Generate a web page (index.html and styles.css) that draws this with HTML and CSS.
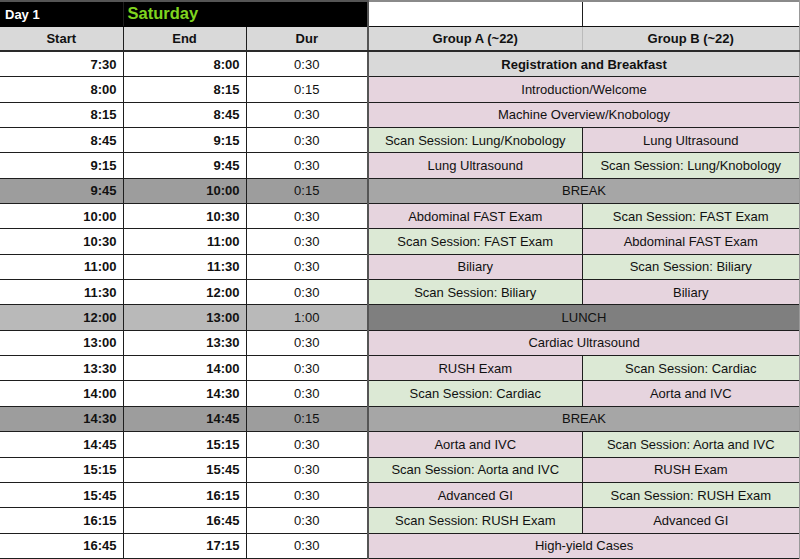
FILE: index.html
```html
<!DOCTYPE html>
<html>
<head>
<meta charset="utf-8">
<link rel="stylesheet" href="styles.css">
</head>
<body>
<table class="sheet">
  <colgroup>
    <col class="c-time"><col class="c-time"><col class="c-dur"><col class="c-ga"><col class="c-gb">
  </colgroup>
  <tr class="title">
    <td class="day">Day 1</td>
    <td class="sat" colspan="2">Saturday</td>
    <td class="blank bl"></td>
    <td class="blank br"></td>
  </tr>
  <tr class="head">
    <td>Start</td><td>End</td><td>Dur</td><td class="gsep">Group A (~22)</td><td class="last">Group B (~22)</td>
  </tr>
  <tr><td class="t">7:30</td><td class="t">8:00</td><td class="d">0:30</td><td class="gsep gray b last" colspan="2">Registration and Breakfast</td></tr>
  <tr><td class="t">8:00</td><td class="t">8:15</td><td class="d">0:15</td><td class="gsep pink last" colspan="2">Introduction/Welcome</td></tr>
  <tr><td class="t">8:15</td><td class="t">8:45</td><td class="d">0:30</td><td class="gsep pink last" colspan="2">Machine Overview/Knobology</td></tr>
  <tr><td class="t">8:45</td><td class="t">9:15</td><td class="d">0:30</td><td class="gsep green">Scan Session: Lung/Knobology</td><td class="pink last">Lung Ultrasound</td></tr>
  <tr><td class="t">9:15</td><td class="t">9:45</td><td class="d">0:30</td><td class="gsep pink">Lung Ultrasound</td><td class="green last">Scan Session: Lung/Knobology</td></tr>
  <tr class="brk"><td class="t">9:45</td><td class="t">10:00</td><td class="d">0:15</td><td class="gsep bcell last" colspan="2">BREAK</td></tr>
  <tr><td class="t">10:00</td><td class="t">10:30</td><td class="d">0:30</td><td class="gsep pink">Abdominal FAST Exam</td><td class="green last">Scan Session: FAST Exam</td></tr>
  <tr><td class="t">10:30</td><td class="t">11:00</td><td class="d">0:30</td><td class="gsep green">Scan Session: FAST Exam</td><td class="pink last">Abdominal FAST Exam</td></tr>
  <tr><td class="t">11:00</td><td class="t">11:30</td><td class="d">0:30</td><td class="gsep pink">Biliary</td><td class="green last">Scan Session: Biliary</td></tr>
  <tr><td class="t">11:30</td><td class="t">12:00</td><td class="d">0:30</td><td class="gsep green">Scan Session: Biliary</td><td class="pink last">Biliary</td></tr>
  <tr class="lunch"><td class="t">12:00</td><td class="t">13:00</td><td class="d">1:00</td><td class="gsep lcell last" colspan="2">LUNCH</td></tr>
  <tr><td class="t">13:00</td><td class="t">13:30</td><td class="d">0:30</td><td class="gsep pink last" colspan="2">Cardiac Ultrasound</td></tr>
  <tr><td class="t">13:30</td><td class="t">14:00</td><td class="d">0:30</td><td class="gsep pink">RUSH Exam</td><td class="green last">Scan Session: Cardiac</td></tr>
  <tr><td class="t">14:00</td><td class="t">14:30</td><td class="d">0:30</td><td class="gsep green">Scan Session: Cardiac</td><td class="pink last">Aorta and IVC</td></tr>
  <tr class="brk"><td class="t">14:30</td><td class="t">14:45</td><td class="d">0:15</td><td class="gsep bcell last" colspan="2">BREAK</td></tr>
  <tr><td class="t">14:45</td><td class="t">15:15</td><td class="d">0:30</td><td class="gsep pink">Aorta and IVC</td><td class="green last">Scan Session: Aorta and IVC</td></tr>
  <tr><td class="t">15:15</td><td class="t">15:45</td><td class="d">0:30</td><td class="gsep green">Scan Session: Aorta and IVC</td><td class="pink last">RUSH Exam</td></tr>
  <tr><td class="t">15:45</td><td class="t">16:15</td><td class="d">0:30</td><td class="gsep pink">Advanced GI</td><td class="green last">Scan Session: RUSH Exam</td></tr>
  <tr><td class="t">16:15</td><td class="t">16:45</td><td class="d">0:30</td><td class="gsep green">Scan Session: RUSH Exam</td><td class="pink last">Advanced GI</td></tr>
  <tr><td class="t">16:45</td><td class="t">17:15</td><td class="d">0:30</td><td class="gsep pink last" colspan="2">High-yield Cases</td></tr>
</table>
</body>
</html>
```
FILE: styles.css
```css
html, body {
  margin: 0;
  padding: 0;
  background: #fff;
  overflow: hidden;
}
body {
  font-family: "Liberation Sans", Arial, sans-serif;
  font-size: 13px;
  color: #111;
}
.sheet {
  border-collapse: collapse;
  table-layout: fixed;
  width: 800px;
}
.c-time { width: 123px; }
.c-dur { width: 122px; }
.c-ga { width: 214px; }
.c-gb { width: 218px; }

.sheet td {
  height: 24.35px;
  padding: 0 6px;
  border: 1px solid #1e1e1e;
  text-align: center;
  vertical-align: middle;
  white-space: nowrap;
  overflow: hidden;
  line-height: 15px;
}
.sheet td:first-child { border-left: none; }

.title td {
  height: 22px;
  background: #000;
  color: #fff;
  font-weight: bold;
  border-top: 2px solid #555;
  border-bottom: 1px solid #000;
}
.title .day {
  text-align: left;
  padding-left: 5px;
  font-size: 13px;
}
.title .sat {
  text-align: left;
  padding-left: 4px;
  color: #7fd41f;
  font-size: 16.5px;
  padding-bottom: 2px;
}
.title .blank {
  background: #fff;
  border-top: 2px solid #8a8a8a;
  border-bottom: 1px solid #111;
  border-left: 2px solid #555;
}
.title .br {
  border-left: 1px solid #e2e2e2;
  border-right: 2px solid #999;
}

.head td {
  height: 23px;
  background: #d9d9d9;
  font-weight: bold;
  border-bottom: 2px solid #2a2a2a;
  border-top: 1px solid #111;
}
.head td.gsep { border-left: 2px solid #555; border-right: 1px solid #bbb; }
.head td.last { border-left: 1px solid #bbb; }

.sheet td.last { border-right: 2px solid #999; }

.t { text-align: right !important; font-weight: bold; }
.d { text-align: center; }

.gsep { border-left: 2px solid #555 !important; }

.gray { background: #d9d9d9; }
.b { font-weight: bold; }
.pink { background: #e6d4de; }
.green { background: #dce9d5; }

.brk td { background: #9d9d9d; }
.brk td.bcell { background: #a6a6a6; }
.lunch td { background: #b9b9b9; }
.lunch td.lcell { background: #7f7f7f; }
```
